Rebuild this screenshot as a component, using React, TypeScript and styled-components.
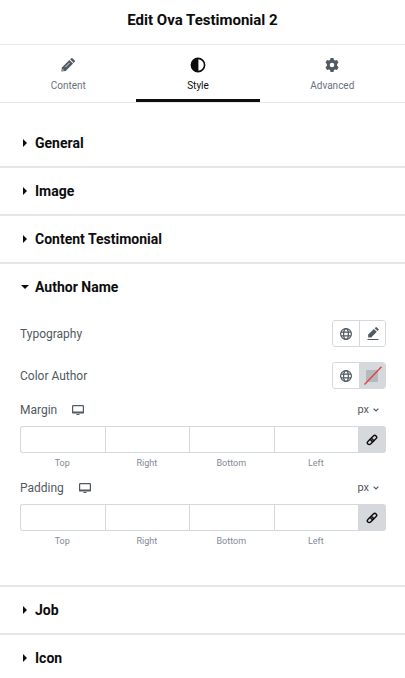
import React, { useState } from 'react';
import styled, { createGlobalStyle, css } from 'styled-components';

const color = {
  ink: '#0c0d0e',
  text: '#515962',
  muted: '#69727d',
  faint: '#818a96',
  line: '#d5d8dc',
  rule: '#e6e8ea',
};

const GlobalStyle = createGlobalStyle`
  *, *::before, *::after { box-sizing: border-box; }
  body {
    margin: 0;
    background: #fff;
    color: ${color.text};
    font-family: Roboto, "Liberation Sans", sans-serif;
    font-size: 12px;
  }
  button, input { font: inherit; color: inherit; }
  button { padding: 0; border: 0; background: none; cursor: pointer; }
  svg { display: block; }
`;

const Panel = styled.main`
  display: flex;
  flex-direction: column;
`;

const Header = styled.header`
  display: flex;
  align-items: center;
  justify-content: center;
  height: 45px;
  padding-bottom: 4px;
  border-bottom: 1px solid ${color.rule};
`;

const Title = styled.h1`
  margin: 0;
  color: ${color.ink};
  font-size: 15px;
  line-height: 20px;
  font-weight: 700;
`;

const Tabs = styled.nav`
  display: flex;
  height: 58px;
  border-bottom: 1px solid ${color.rule};
`;

const Tab = styled.button<{ $active: boolean }>`
  flex: 1 1 auto;
  display: flex;
  flex-direction: column;
  align-items: center;
  gap: 5px;
  padding-top: 12px;
  border-bottom: 3px solid transparent;
  color: ${color.muted};
  font-size: 10px;
  line-height: 16px;

  svg { color: ${color.text}; }

  ${(p) => p.$active && css`
    border-bottom-color: ${color.ink};
    color: ${color.ink};
    svg { color: ${color.ink}; }
  `}
`;

const TabIcon = styled.span`
  display: flex;
  align-items: center;
  justify-content: center;
  height: 16px;
`;

const Sections = styled.div`
  padding-top: 15px;
`;

const Section = styled.section`
  border-top: 2px solid #e6e6e6;

  &:first-child { border-top-color: transparent; }
`;

const SectionHeading = styled.h2`
  margin: 0;
  font-size: 14px;
  font-weight: 700;
`;

const SectionToggle = styled.button`
  display: flex;
  align-items: center;
  width: 100%;
  height: 46px;
  padding: 0 20px;
  color: ${color.ink};
  text-align: left;
`;

const ArrowSlot = styled.span`
  display: flex;
  justify-content: center;
  width: 10px;
  margin-right: 5px;
`;

const Controls = styled.div`
  padding: 10px 19px 25px 20px;
`;

const ControlRow = styled.div`
  display: flex;
  align-items: center;
  justify-content: space-between;
  height: 27px;
  margin-bottom: 15px;
`;

const ButtonPair = styled.div`
  display: flex;
  height: 27px;
  border: 1px solid ${color.line};
  border-radius: 3px;
  overflow: hidden;
`;

const PairButton = styled.button<{ $filled?: boolean }>`
  display: flex;
  align-items: center;
  justify-content: center;
  width: 26px;
  background: ${(p) => (p.$filled ? color.line : '#fff')};

  & + & { border-left: 1px solid ${color.line}; }
`;

const DimensionGroup = styled.fieldset`
  min-width: 0;
  margin: 0 0 12px;
  padding: 0;
  border: 0;
`;

const DimensionHead = styled.div`
  display: flex;
  align-items: center;
  height: 12px;
  margin-bottom: 10px;
`;

const DeviceButton = styled.button`
  margin-left: 15px;
`;

const UnitButton = styled.button`
  display: flex;
  align-items: center;
  gap: 4px;
  margin-left: auto;
  padding-right: 7px;
  font-size: 11px;
  line-height: 14px;
`;

const DimensionFields = styled.div`
  display: flex;
`;

const Field = styled.div`
  flex: 1 1 0;
  min-width: 0;
  display: flex;
  flex-direction: column;
  text-align: center;
`;

const FieldInput = styled.input`
  width: 100%;
  height: 27px;
  padding: 0 4px;
  border: 1px solid ${color.line};
  border-right: 0;
  border-radius: 0;
  background: #fff;
  text-align: center;
  outline: none;

  ${Field}:first-child & { border-radius: 3px 0 0 3px; }
`;

const FieldLabel = styled.label`
  margin-top: 3px;
  color: ${color.faint};
  font-size: 9px;
  line-height: 14px;
`;

const LinkButton = styled.button`
  display: flex;
  align-items: center;
  justify-content: center;
  width: 28px;
  height: 27px;
  border-radius: 0 3px 3px 0;
  background: ${color.line};
  color: ${color.ink};
`;

const PencilIcon = () => (
  <svg width="14" height="14" viewBox="0 0 14 14" fill="currentColor">
    <path d="M8.4 1.900 12.100 5.600 4.600 13.100 .4 13.600 .9 9.400Z" />
    <path d="M9.100 1.200 9.900.5a1.300 1.300 0 0 1 1.800 0l1.800 1.800a1.300 1.300 0 0 1 0 1.800l-.7.8Z" />
    <path d="M4.300 9.200 8.600 4.900" stroke="#fff" strokeWidth=".8" />
    <path d="M1.700 10.900 3.100 12.300 1.400 12.600Z" fill="#fff" />
  </svg>
);

const ContrastIcon = () => (
  <svg width="16" height="16" viewBox="0 0 16 16">
    <circle cx="8" cy="8" r="6.600" fill="none" stroke="currentColor" strokeWidth="1.600" />
    <path d="M8.400 1.400v13.200H8A6.600 6.600 0 0 1 8 1.400Z" fill="currentColor" />
  </svg>
);

const GearIcon = () => (
  <svg width="14" height="14" viewBox="0 0 14 14" fill="currentColor" fillRule="evenodd">
    <path d="M5.500 0h3l.4 1.900 1.200.7L12 2l1.500 2.600-1.400 1.300v1.900l1.500 1.400L12 12l-1.900-.6-1.200.7L8.500 14h-3l-.4-1.900-1.200-.7L2 12 .5 9.300l1.400-1.400V6L.5 4.600 2 2l1.900.6 1.200-.7ZM7 4.700a2.300 2.300 0 1 0 0 4.600 2.300 2.300 0 0 0 0-4.600Z" />
  </svg>
);

const GlobeIcon = () => (
  <svg width="12" height="12" viewBox="0 0 12 12" fill="none" stroke="currentColor" strokeWidth="1.200">
    <circle cx="6" cy="6" r="5.400" />
    <ellipse cx="6" cy="6" rx="2.400" ry="5.400" />
    <path d="M1 4.200h10M1 7.800h10" />
  </svg>
);

const EditIcon = () => (
  <svg width="12" height="13" viewBox="0 0 12 13" fill="currentColor">
    <path d="M6.900 1.900 9.800 4.800 4.200 10.400H1.200V7.600Z" />
    <path d="M7.700 1.200 8.500.4a1 1 0 0 1 1.400 0l1.500 1.500a1 1 0 0 1 0 1.400l-.8.8Z" />
    <path d="M.5 12h11v1H.5Z" />
  </svg>
);

const EmptySwatchIcon = () => (
  <svg width="18" height="20" viewBox="0 0 18 20">
    <rect x="2" y="4" width="12" height="12" rx="1" fill="#b4b9bd" />
    <path d="M.5 18.500 17.500 .8" stroke="#e8403c" strokeWidth="1.400" />
  </svg>
);

const MonitorIcon = () => (
  <svg width="12" height="10" viewBox="0 0 12 10">
    <rect x=".6" y=".6" width="10.800" height="7.400" rx=".6" fill="none" stroke="currentColor" strokeWidth="1.200" />
    <path d="M1 6.400h10V8H1ZM4.500 9h3v1h-3Z" fill="currentColor" />
  </svg>
);

const ChevronIcon = () => (
  <svg width="6" height="4" viewBox="0 0 6 4" fill="none" stroke="currentColor" strokeWidth="1.200">
    <path d="M.6.6 3 2.900 5.400.6" />
  </svg>
);

const ChainIcon = () => (
  <svg width="12" height="12" viewBox="0 0 12 12" fill="none" stroke="currentColor" strokeWidth="1.400">
    <g transform="rotate(-45 6 6)">
      <rect x=".2" y="4.100" width="6.800" height="3.800" rx="1.900" />
      <rect x="5" y="4.100" width="6.800" height="3.800" rx="1.900" />
    </g>
  </svg>
);

const ArrowIcon = ({ open }: { open: boolean }) =>
  open ? (
    <svg width="8" height="4" viewBox="0 0 8 4" fill="currentColor"><path d="M0 0h8L4 4Z" /></svg>
  ) : (
    <svg width="4" height="8" viewBox="0 0 4 8" fill="currentColor"><path d="M0 0v8l4-4Z" /></svg>
  );

const sides = ['Top', 'Right', 'Bottom', 'Left'];

function Dimensions({ name }: { name: string }) {
  return (
    <DimensionGroup aria-label={name}>
      <DimensionHead>
        <span>{name}</span>
        <DeviceButton type="button" aria-label="Desktop"><MonitorIcon /></DeviceButton>
        <UnitButton type="button">px<ChevronIcon /></UnitButton>
      </DimensionHead>
      <DimensionFields>
        {sides.map((side) => (
          <Field key={side}>
            <FieldInput id={`${name}-${side}`} type="text" inputMode="numeric" />
            <FieldLabel htmlFor={`${name}-${side}`}>{side}</FieldLabel>
          </Field>
        ))}
        <LinkButton type="button" aria-label="Link values" aria-pressed="true"><ChainIcon /></LinkButton>
      </DimensionFields>
    </DimensionGroup>
  );
}

function AuthorControls() {
  return (
    <Controls>
      <ControlRow>
        <span>Typography</span>
        <ButtonPair>
          <PairButton type="button" aria-label="Global fonts"><GlobeIcon /></PairButton>
          <PairButton type="button" aria-label="Edit typography"><EditIcon /></PairButton>
        </ButtonPair>
      </ControlRow>
      <ControlRow>
        <span>Color Author</span>
        <ButtonPair>
          <PairButton type="button" aria-label="Global colors"><GlobeIcon /></PairButton>
          <PairButton type="button" aria-label="Pick color" $filled><EmptySwatchIcon /></PairButton>
        </ButtonPair>
      </ControlRow>
      <Dimensions name="Margin" />
      <Dimensions name="Padding" />
    </Controls>
  );
}

const tabs = [
  { name: 'Content', Icon: PencilIcon },
  { name: 'Style', Icon: ContrastIcon },
  { name: 'Advanced', Icon: GearIcon },
];

const sections = ['General', 'Image', 'Content Testimonial', 'Author Name', 'Job', 'Icon'];

export default function App() {
  const [tab, setTab] = useState('Style');
  const [openSection, setOpenSection] = useState('Author Name');

  return (
    <>
      <GlobalStyle />
      <Panel>
        <Header><Title>Edit Ova Testimonial 2</Title></Header>
        <Tabs>
          {tabs.map(({ name, Icon }) => (
            <Tab key={name} type="button" $active={tab === name} onClick={() => setTab(name)}>
              <TabIcon><Icon /></TabIcon>
              {name}
            </Tab>
          ))}
        </Tabs>
        <Sections>
          {sections.map((name) => {
            const open = openSection === name;
            return (
              <Section key={name}>
                <SectionHeading>
                  <SectionToggle type="button" aria-expanded={open} onClick={() => setOpenSection(open ? '' : name)}>
                    <ArrowSlot><ArrowIcon open={open} /></ArrowSlot>
                    {name}
                  </SectionToggle>
                </SectionHeading>
                {open && name === 'Author Name' && <AuthorControls />}
              </Section>
            );
          })}
        </Sections>
      </Panel>
    </>
  );
}
